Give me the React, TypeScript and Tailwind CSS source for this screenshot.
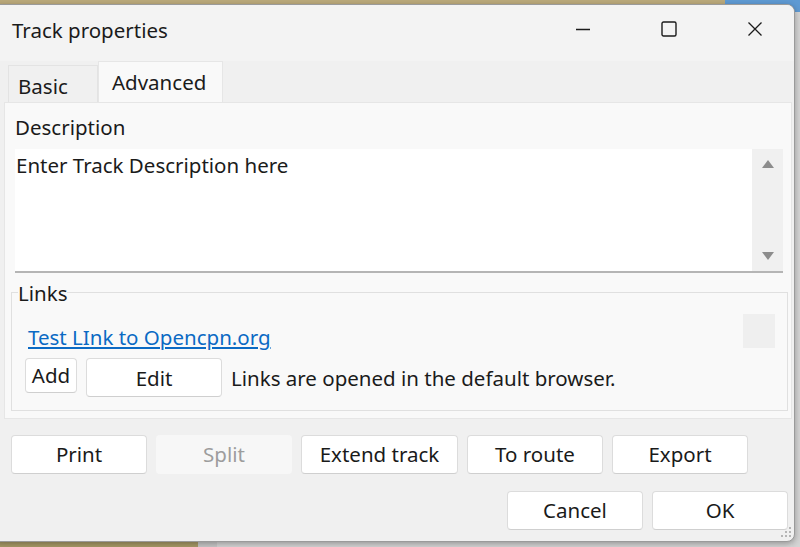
import { useState } from "react";

function Btn({
  label,
  className = "",
  disabled = false
}: {
  label: string;
  className?: string;
  disabled?: boolean;
}) {
  return (
    <button
      disabled={disabled}
      className={
        "flex items-center justify-center rounded-[4px] text-[20.5px] leading-none " +
        (disabled
          ? "bg-[#f7f7f7] text-[#9d9d9d]"
          : "border border-[#dcdcdc] border-b-[#cfcfcf] bg-white text-[#1a1a1a]") +
        " " +
        className
      }
    >
      {label}
    </button>
  );
}

export default function App() {
  const [tab, setTab] = useState("advanced");
  const [description, setDescription] = useState("Enter Track Description here");

  return (
    <div className="relative h-[547px] w-[800px] overflow-hidden bg-[#9f9fa3] font-['Segoe_UI','Noto_Sans',sans-serif]">
      {/* desktop behind the dialog */}
      <div className="absolute left-0 top-0 h-[12px] w-[725px] bg-[#bba97b]" />
      <div className="absolute left-[725px] top-0 h-[12px] w-[75px] bg-[#5f9ad3]" />
      <div className="absolute bottom-0 left-0 h-[12px] w-[198px] bg-[#a99b67]" />
      <div className="absolute bottom-0 left-[198px] h-[12px] w-[19px] bg-[#c9c9c9]" />
      <div className="absolute bottom-0 left-[217px] h-[12px] w-[583px] bg-[#d6d6d6]" />
      <div className="absolute right-0 top-[12px] h-[535px] w-[8px] bg-[#d4d4d4]" />

      {/* dialog window */}
      <div className="absolute left-[-8px] top-[4px] flex h-[538px] w-[803px] flex-col overflow-hidden rounded-[8px] border border-[#9a9a9a] bg-[#f0f0f0] shadow-[0_2px_6px_rgba(0,0,0,0.3)]">
        {/* title bar */}
        <div className="flex h-[56px] shrink-0 items-center bg-[#f3f3f3] pb-[8px] pl-[19px]">
          <span className="mt-[3px] text-[20.5px] text-[#1b1b1b]">Track properties</span>
          <div className="ml-auto flex items-center gap-[70px] pr-[31px]">
            <svg width="16" height="16" viewBox="0 0 16 16">
              <path d="M1 8.5h14" stroke="#1b1b1b" strokeWidth="1.4" />
            </svg>
            <svg width="16" height="16" viewBox="0 0 16 16">
              <rect x="1" y="1" width="14" height="14" rx="1.5" fill="none" stroke="#1b1b1b" strokeWidth="1.4" />
            </svg>
            <svg width="16" height="16" viewBox="0 0 16 16">
              <path d="M1.5 1.5l13 13M14.5 1.5l-13 13" stroke="#1b1b1b" strokeWidth="1.3" />
            </svg>
          </div>
        </div>

        {/* tabs */}
        <div className="flex h-[41px] shrink-0 items-end pl-[15px]">
          <button
            onClick={() => setTab("basic")}
            className="flex h-[37px] w-[90px] items-center border border-b-0 border-[#e3e3e3] bg-[#f0f0f0] pl-[9px] pt-[5px] text-[20.5px] text-[#1b1b1b]"
          >
            Basic
          </button>
          <button
            onClick={() => setTab("advanced")}
            className="flex h-[41px] w-[125px] items-center border border-b-0 border-[#e6e6e6] bg-[#f9f9f9] pl-[13px] text-[20.5px] text-[#1b1b1b]"
          >
            Advanced
          </button>
        </div>

        {/* panel */}
        <div className="ml-[11px] mr-[2px] flex h-[317px] shrink-0 flex-col border border-[#e6e6e6] bg-[#f9f9f9] pl-[10px] pr-[8px]">
          <div className="pt-[11px] text-[20.5px] leading-[26px] text-[#1b1b1b]">Description</div>
          <div className="mt-[9px] flex h-[124px] border-b-2 border-[#b5b5b5] bg-white">
            <textarea
              value={description}
              onChange={e => setDescription(e.target.value)}
              className="h-full flex-1 resize-none bg-white pl-[1px] pt-[3px] text-[20.5px] leading-[26px] text-[#1b1b1b] outline-none"
            />
            <div className="flex w-[31px] flex-col items-center justify-between bg-[#f0f0f0] py-[10px]">
              <svg width="14" height="10" viewBox="0 0 14 10">
                <path d="M7 1L13 9H1z" fill="#8c8c8c" />
              </svg>
              <svg width="14" height="10" viewBox="0 0 14 10">
                <path d="M1 1h12L7 9z" fill="#8c8c8c" />
              </svg>
            </div>
          </div>

          {/* links group */}
          <div className="relative ml-[-4px] mr-[-5px] mt-[19px] h-[119px] border border-[#e0e0e0] pl-[16px] pr-[12px]">
            <span className="absolute left-[6px] top-[-12px] bg-[#f9f9f9] text-[20.5px] leading-[24px] text-[#1b1b1b]">
              Links
            </span>
            <div className="mt-[31px] flex items-center justify-between">
              <a href="#" className="text-[20.5px] leading-[26px] text-[#0b6ac4] underline underline-offset-2">
                Test LInk to Opencpn.org
              </a>
              <div className="mt-[-12px] h-[34px] w-[32px] bg-[#efefef]" />
            </div>
            <div className="ml-[-3px] mt-[8px] flex items-start">
              <Btn label="Add" className="h-[35px] w-[52px]" />
              <Btn label="Edit" className="ml-[9px] h-[39px] w-[136px] pt-[2px]" />
              <span className="ml-[9px] mt-[7px] text-[20.5px] leading-[26px] text-[#1b1b1b]">
                Links are opened in the default browser.
              </span>
            </div>
          </div>
        </div>

        {/* action buttons */}
        <div className="mt-[16px] flex gap-[9px] pl-[18px]">
          <Btn label="Print" className="h-[39px] w-[136px]" />
          <Btn label="Split" className="h-[39px] w-[136px]" disabled />
          <Btn label="Extend track" className="h-[39px] w-[157px]" />
          <Btn label="To route" className="h-[39px] w-[136px]" />
          <Btn label="Export" className="h-[39px] w-[136px]" />
        </div>
        <div className="mt-[17px] flex justify-end gap-[9px] pr-[6px]">
          <Btn label="Cancel" className="h-[39px] w-[136px]" />
          <Btn label="OK" className="h-[39px] w-[136px]" />
        </div>
        <div className="absolute bottom-[3px] right-[2px]">
          <svg width="12" height="12" viewBox="0 0 12 12" fill="#b5b5b5">
            <rect x="9" y="1" width="2" height="2" />
            <rect x="5" y="5" width="2" height="2" />
            <rect x="9" y="5" width="2" height="2" />
            <rect x="1" y="9" width="2" height="2" />
            <rect x="5" y="9" width="2" height="2" />
            <rect x="9" y="9" width="2" height="2" />
          </svg>
        </div>
      </div>
    </div>
  );
}
